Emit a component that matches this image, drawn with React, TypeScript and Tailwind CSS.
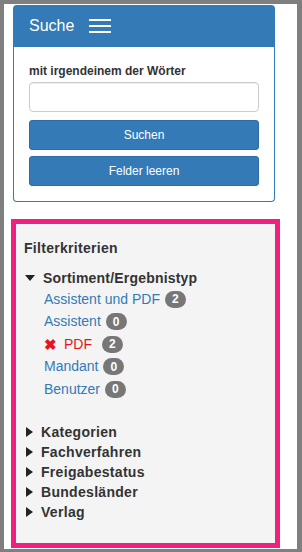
import React from 'react';

const TriangleDown = () => (
    <svg width="10" height="6" viewBox="0 0 10 6" className="shrink-0">
        <polygon points="0,0 10,0 5,6" fill="#222" />
    </svg>
);

const TriangleRight = () => (
    <svg width="7" height="10" viewBox="0 0 7 10" className="shrink-0">
        <polygon points="0,0 7,5 0,10" fill="#222" />
    </svg>
);

const Badge = ({ n }: { n: number }) => (
    <span className="inline-flex h-[17px] min-w-[20px] items-center justify-center rounded-[10px] bg-[#777] px-[7px] text-[12px] font-bold leading-none text-white">
        {n}
    </span>
);

const items = [
    { label: 'Assistent und PDF', count: 2 },
    { label: 'Assistent', count: 0 },
    { label: 'PDF', count: 2, active: true },
    { label: 'Mandant', count: 0 },
    { label: 'Benutzer', count: 0 },
];

const sections = ['Kategorien', 'Fachverfahren', 'Freigabestatus', 'Bundesländer', 'Verlag'];

export default function App() {
    return (
        <div className="h-[552px] w-[302px] overflow-hidden border-b-[3px] border-l-4 border-r-[5px] border-t-4 border-[#7f7f7f] bg-white font-['Liberation_Sans',Arial,sans-serif] text-[#333]">
            {/* Suche panel */}
            <div className="ml-[9px] mt-[1px] w-[262px]">
                <div className="flex h-[42px] items-center gap-[15px] rounded-t-[4px] bg-[#337ab7] pl-[16px]">
                    <span className="text-[16px] leading-none text-white">Suche</span>
                    <div className="flex w-[22px] flex-col gap-[4px]">
                        <div className="h-[2px] bg-white" />
                        <div className="h-[2px] bg-white" />
                        <div className="h-[2px] bg-white" />
                    </div>
                </div>
                <div className="rounded-b-[4px] border-x border-b border-[#337ab7] px-[15px] pb-[15px] pt-[16px]">
                    <label className="mb-[2px] block text-[12px] font-bold leading-[17px] text-[#333]">mit irgendeinem der Wörter</label>
                    <input
                        type="text"
                        className="block h-[30px] w-full rounded-[4px] border border-[#ccc] bg-white shadow-[inset_0_1px_1px_rgba(0,0,0,0.075)] outline-none"
                    />
                    <button className="mt-[8px] block h-[30px] w-full rounded-[3px] border border-[#2e6da4] bg-[#337ab7] text-[12px] text-white">
                        Suchen
                    </button>
                    <button className="mt-[6px] block h-[30px] w-full rounded-[3px] border border-[#2e6da4] bg-[#337ab7] text-[12px] text-white">
                        Felder leeren
                    </button>
                </div>
            </div>

            {/* Filter box */}
            <div className="ml-[7px] mt-[17px] h-[329px] w-[269px] border-[5px] border-[#f0207f] bg-[#f4f4f4] pl-[8px] pt-[14px]">
                <h3 className="text-[14px] font-bold leading-[20px] tracking-[0.3px] text-[#333]">Filterkriterien</h3>
                <div className="mt-[10px]">
                    <div className="flex items-center gap-[8px] pl-[1px] text-[14px] font-bold leading-[20px] tracking-[0.2px]">
                        <TriangleDown />
                        <span>Sortiment/Ergebnistyp</span>
                    </div>
                    <ul className="pl-[20px]">
                        {items.map((it) => (
                            <li key={it.label} className="flex h-[22.5px] items-center text-[14px]">
                                {it.active ? (
                                    <>
                                        <span className="mr-[7px] text-[15px] font-bold leading-none text-[#e8141b]">✖</span>
                                        <span className="mr-[10px] text-[#e8141b]">PDF</span>
                                    </>
                                ) : (
                                    <span className="mr-[5px] text-[#337ab7]">{it.label}</span>
                                )}
                                <Badge n={it.count} />
                            </li>
                        ))}
                    </ul>
                </div>
                <div className="mt-[21px]">
                    {sections.map((s) => (
                        <div key={s} className="flex items-center gap-[8px] pl-[2px] text-[14px] font-bold leading-[20px] tracking-[0.3px] text-[#333]">
                            <TriangleRight />
                            <span>{s}</span>
                        </div>
                    ))}
                </div>
            </div>
        </div>
    );
}
